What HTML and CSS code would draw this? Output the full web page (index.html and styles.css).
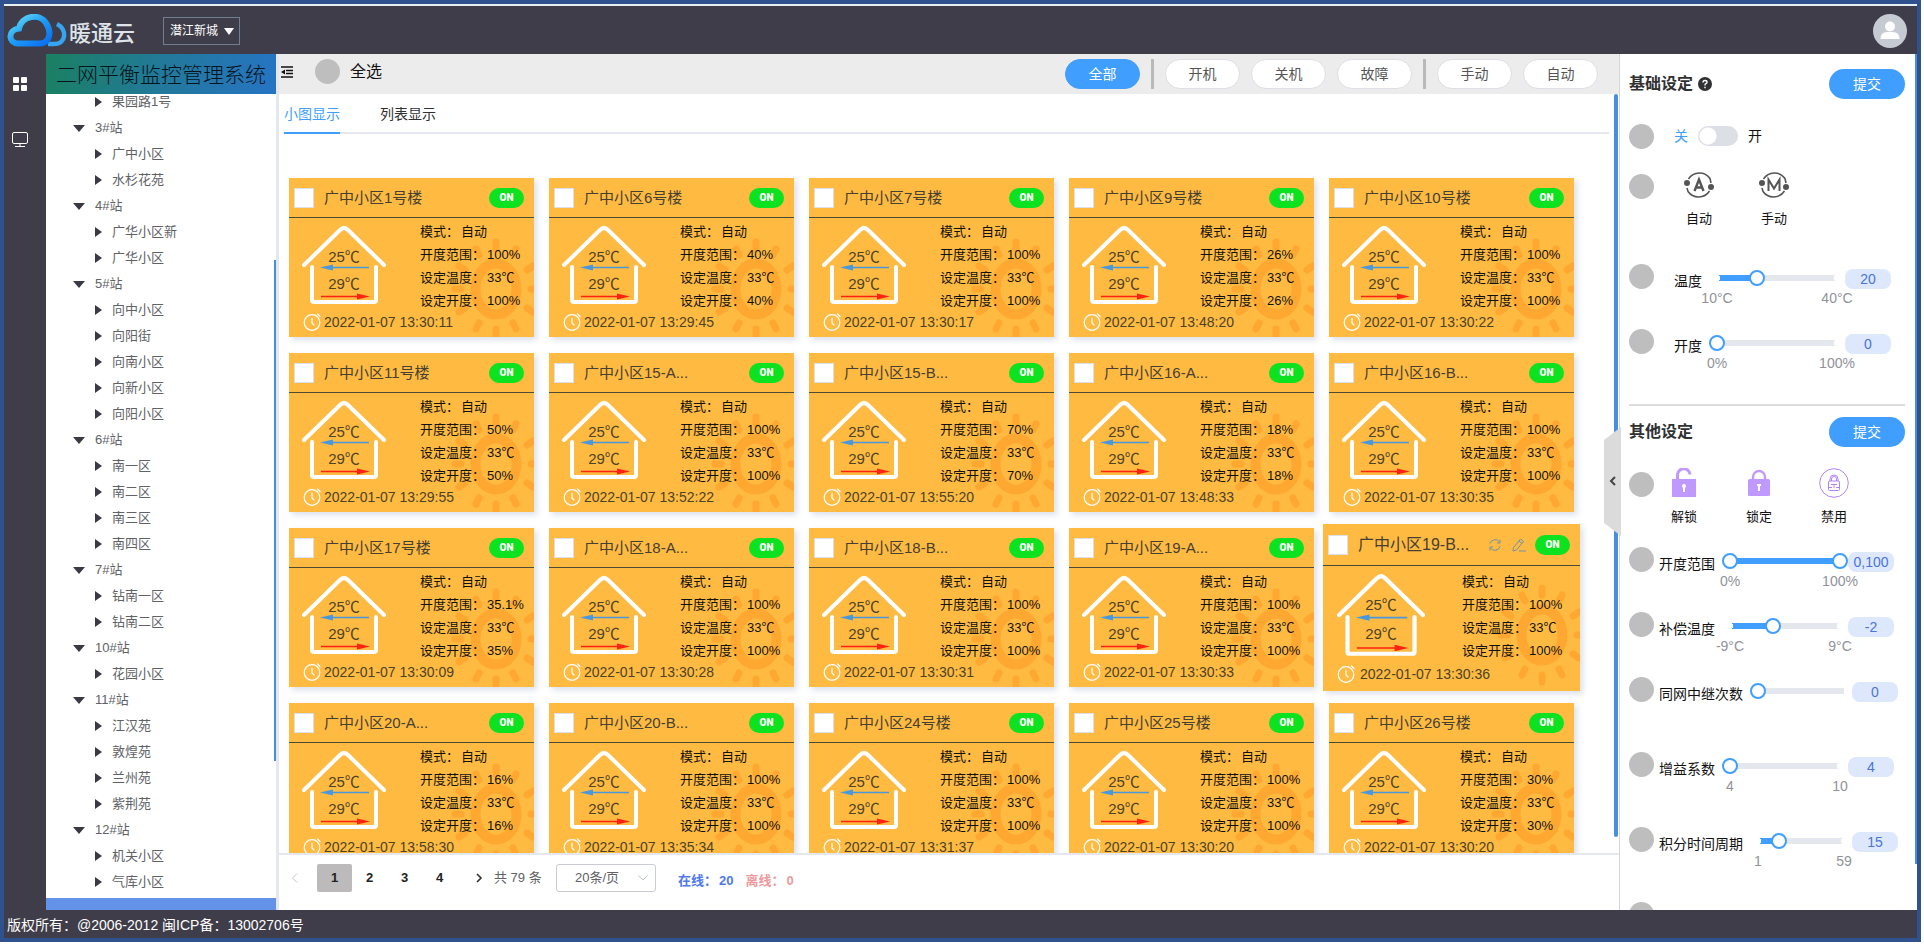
FILE: index.html
```html
<!DOCTYPE html>
<html lang="zh-CN">
<head>
<meta charset="utf-8">
<title>二网平衡监控管理系统</title>
<link rel="stylesheet" href="styles.css">
</head>
<body>
<svg class="defs" aria-hidden="true">
  <defs>
    <symbol id="house" viewBox="0 0 84 80">
      <g fill="none" stroke="#fff" stroke-width="4" stroke-linecap="round" stroke-linejoin="round">
        <path d="M2 40 38 5q4-4 8 0L82 40"/>
        <path d="M10 42v33q0 2 2 2h60q2 0 2-2V42"/>
      </g>
      <path d="M28 42.500h39" stroke="#4a98dc" stroke-width="1.500"/><path d="M18 42.500 31 39.500v6z" fill="#4a98dc"/>
      <path d="M19 71.500h38" stroke="#f21" stroke-width="1.500"/><path d="M68 71.500 55 68.500v6z" fill="#f21"/>
    </symbol>
    <symbol id="clock" viewBox="0 0 18 18">
      <g fill="none" stroke="#fff" stroke-width="1.200" stroke-linecap="round"><circle cx="9" cy="9.500" r="7.800"/><path d="M9 5v5l2 2M14.500 1l2.500 2.500"/></g>
    </symbol>
    <symbol id="sun" viewBox="0 0 110 110">
      <ellipse cx="55" cy="55" rx="20.500" ry="25.500" fill="none" stroke="#ffa831" stroke-width="10"/>
      <path fill="none" stroke="#ffa831" stroke-width="7" stroke-linecap="round" d="M55 8v7M75 15l-3 6M92 32l-6 4M96 55h-6M92 78l-6-4M75 95l-3-6M55 102v-7M35 95l3-6M18 78l6-4M14 55h6M18 32l6 4M35 15l3 6"/>
    </symbol>
  </defs>
</svg>
<div class="app">
  <header class="top">
    <svg class="logo" viewBox="0 0 60 34" aria-hidden="true">
      <defs><linearGradient id="lg" x1="0" y1="0" x2="1" y2="1"><stop offset="0" stop-color="#6fe3f5"/><stop offset=".5" stop-color="#1e9bf5"/><stop offset="1" stop-color="#0a6df0"/></linearGradient></defs>
      <path d="M50 10c10 5 10 20-3 20h-6" fill="none" stroke="#37a4f2" stroke-width="4.500"/>
      <path d="M11 29.500C1 29 .5 16 12 14.500 15 1 33-1 39 9c6 9 4 20-6 20.500z" fill="none" stroke="url(#lg)" stroke-width="6"/>
    </svg>
    <span class="brand">暖通云</span>
    <select class="city" aria-label="小区"><option>潜江新城</option></select>
    <svg class="avatar" viewBox="0 0 34 34" role="img" aria-label="用户"><circle cx="17" cy="17" r="17" fill="#c6cad2"/><circle cx="17" cy="12.500" r="5" fill="#fff"/><path d="M7.500 25q0-7 7-7h5q7 0 7 7z" fill="#fff"/></svg>
  </header>
  <div class="body">
    <nav class="rail">
      <svg viewBox="0 0 16 16" width="16" height="16"><g fill="#fff"><rect x="1" y="1" width="6" height="6" rx="1"/><rect x="9" y="1" width="6" height="6" rx="1"/><rect x="1" y="9" width="6" height="6" rx="1"/><rect x="9" y="9" width="6" height="6" rx="1"/></g></svg>
      <svg viewBox="0 0 16 16" width="16" height="16"><g fill="none" stroke="#fff"><rect x=".5" y=".5" width="15" height="11" rx="1.500"/><path d="M8 12v3M3 14.500h10"/></g></svg>
    </nav>
    <aside class="side">
      <h1 class="system">二网平衡监控管理系统</h1>
      <div class="treebox"><ul class="tree" id="tree"></ul></div>
      <div class="sidebar-end"></div>
    </aside>
    <main class="main">
      <div class="toolbar">
        <svg class="fold" viewBox="0 0 12 12" width="12" height="12"><path d="M0 1h12M5 4.500h7M5 7.500h7M0 11h12" stroke="#111" stroke-width="1.500"/><path d="M0 6l4-2.500v5z" fill="#111"/></svg>
        <input class="dot" type="checkbox" id="all"><label class="all" for="all">全选</label>
        <div class="filters">
          <button class="pill on">全部</button><i></i>
          <button class="pill">开机</button><button class="pill">关机</button><button class="pill">故障</button><i></i>
          <button class="pill">手动</button><button class="pill">自动</button>
        </div>
      </div>
      <div class="scroller">
        <div class="tabs"><button class="tab active">小图显示</button><button class="tab">列表显示</button></div>
        <div class="cards" id="cards"></div>
      </div>
      <div class="pager">
        <button class="pg" aria-label="上一页"><svg viewBox="0 0 12 12" width="12" height="12"><path d="M8 1.500 3.500 6 8 10.500" fill="none" stroke="#c0c4cc"/></svg></button>
        <button class="pg cur">1</button><button class="pg">2</button><button class="pg">3</button><button class="pg">4</button>
        <button class="pg next" aria-label="下一页"><svg viewBox="0 0 12 12" width="12" height="12"><path d="M4 2 8 6l-4 4" fill="none" stroke="#303133" stroke-width="1.600"/></svg></button>
        <span class="total">共 79 条</span>
        <select class="size" aria-label="每页条数"><option>20条/页</option></select>
        <b class="online">在线：<span>20</span></b><b class="offline">离线：<span>0</span></b>
      </div>
    </main>
    <aside class="panel">
      <button class="handle" aria-label="收起"><svg viewBox="0 0 8 12" width="8" height="12"><path d="M6 2 2 6l4 4" fill="none" stroke="#444" stroke-width="2"/></svg></button>
      <div class="head"><h2>基础设定</h2><svg class="help" viewBox="0 0 14 14" width="14" height="14"><circle cx="7" cy="7" r="7" fill="#303133"/><path d="M5 5.500q0-2 2-2t2 1.700q0 1-1.200 1.500Q7 7 7 8.500M7 9.700v1.500" fill="none" stroke="#fff" stroke-width="1.400"/></svg><button class="submit">提交</button></div>
      <div class="row h50"><input class="dot" type="checkbox" aria-label="开关"><div class="switchline"><span class="off">关</span><input type="checkbox" class="switch" aria-label="开机"><span>开</span></div></div>
      <div class="row h90"><input class="dot" type="checkbox" aria-label="模式">
        <div class="modes">
          <button class="mode"><svg viewBox="0 0 30 30" width="30" height="30"><g fill="none" stroke="#555" stroke-width="1.600"><path d="M4.500 9A13 13 0 0 1 26 8.500M27 13l-1-4.500M25.500 21A13 13 0 0 1 4 21.500M3 18l1 3.500"/><path d="M10.500 21 15 9.500 19.500 21M12 17.500h6" stroke-width="2.400"/></g><circle cx="3" cy="13" r="3" fill="#555"/><circle cx="27" cy="17" r="3" fill="#555"/></svg>自动</button>
          <button class="mode"><svg viewBox="0 0 30 30" width="30" height="30"><g fill="none" stroke="#555" stroke-width="1.600"><path d="M4.500 9A13 13 0 0 1 26 8.500M27 13l-1-4.500M25.500 21A13 13 0 0 1 4 21.500M3 18l1 3.500"/><path d="M9.500 21V9.500l5.500 9 5.500-9V21" stroke-width="2"/></g><circle cx="3" cy="13" r="3" fill="#555"/><circle cx="27" cy="17" r="3" fill="#555"/></svg>手动</button>
        </div></div>
      <div class="row base"><input class="dot" type="checkbox" aria-label="选择温度"><label for="r1">温度</label>
        <div class="slide"><input class="range" id="r1" type="range" min="10" max="40" value="20" style="--v:33.3%"><div class="marks"><span>10°C</span><span>40°C</span></div></div><output>20</output></div>
      <div class="row base"><input class="dot" type="checkbox" aria-label="选择开度"><label for="r2">开度</label>
        <div class="slide"><input class="range" id="r2" type="range" value="0" style="--v:0%"><div class="marks"><span>0%</span><span>100%</span></div></div><output>0</output></div>
      <hr>
      <div class="head"><h2>其他设定</h2><button class="submit">提交</button></div>
      <div class="row h75"><input class="dot" type="checkbox" aria-label="锁">
        <div class="modes locks">
          <button class="mode"><svg viewBox="0 0 30 30" width="30" height="30"><path d="M8.500 12V7.500a6 6 0 0 1 12.500-1" fill="none" stroke="#c099ff" stroke-width="3"/><path d="M3 11h24v18H3z" fill="#c099ff"/><path d="M15 17v7" stroke="#fff" stroke-width="2"/><circle cx="15" cy="18" r="2" fill="#fff"/></svg>解锁</button>
          <button class="mode"><svg viewBox="0 0 30 30" width="30" height="30"><path d="M9 12V9a6 6 0 0 1 12 0v3" fill="none" stroke="#c099ff" stroke-width="2.400"/><rect x="4" y="11" width="22" height="17" rx="1.500" fill="#c099ff"/><path d="M15 16v7M13 17h4" stroke="#fff" stroke-width="2"/></svg>锁定</button>
          <button class="mode"><svg viewBox="0 0 30 30" width="30" height="30"><g fill="none" stroke="#b184f5"><circle cx="15" cy="15" r="14.300"/><rect x="9.500" y="13" width="11" height="9.500" rx="1"/><path d="M11 13v-2a4 4 0 0 1 8 0v2M12.500 13v-2a2.500 2.500 0 0 1 5 0v2M12 16.500h6M15 17v3M10 19.500h3M17 19.500h3"/></g></svg>禁用</button>
        </div></div>
      <div class="row"><input class="dot" type="checkbox" aria-label="选择开度范围"><label for="r3">开度范围</label>
        <div class="slide"><input class="range" id="r3" type="range" value="0" style="--v:100%"><input class="range upper" type="range" value="100" aria-label="开度上限"><div class="marks"><span>0%</span><span>100%</span></div></div><output>0,100</output></div>
      <div class="row"><input class="dot" type="checkbox" aria-label="选择补偿温度"><label for="r4">补偿温度</label>
        <div class="slide"><input class="range" id="r4" type="range" min="-9" max="9" value="-2" style="--v:38.9%"><div class="marks"><span>-9°C</span><span>9°C</span></div></div><output>-2</output></div>
      <div class="row long h75"><input class="dot" type="checkbox" aria-label="选择中继次数"><label for="r5">同网中继次数</label>
        <div class="slide"><input class="range plain" id="r5" type="range" value="0" style="--v:0%"></div><output>0</output></div>
      <div class="row h75"><input class="dot" type="checkbox" aria-label="选择增益系数"><label for="r6">增益系数</label>
        <div class="slide"><input class="range" id="r6" type="range" min="4" max="10" value="4" style="--v:0%"><div class="marks"><span>4</span><span>10</span></div></div><output>4</output></div>
      <div class="row long h75"><input class="dot" type="checkbox" aria-label="选择积分时间"><label for="r7">积分时间周期</label>
        <div class="slide"><input class="range" id="r7" type="range" min="1" max="59" value="15" style="--v:24.1%"><div class="marks"><span>1</span><span>59</span></div></div><output>15</output></div>
      <div class="row"><input class="dot" type="checkbox" aria-label="更多"></div>
    </aside>
  </div>
  <footer class="foot">版权所有：@2006-2012 闽ICP备：13002706号</footer>
</div>
<script src="app.js"></script>
</body>
</html>
```
FILE: styles.css
```css
* { box-sizing: border-box; }
body { margin: 0; height: 100vh; padding: 0 3px 2px 0; background: #fff; color: #303133; font: 14px/20px "Liberation Sans", "Noto Sans CJK SC", sans-serif; overflow: hidden; }
button, input, select, output { font: inherit; color: inherit; margin: 0; }
button { border: 0; background: none; padding: 0; cursor: pointer; }
h1, h2, ul { margin: 0; padding: 0; }
.defs { position: absolute; width: 0; height: 0; }
.app { height: 100%; display: flex; flex-direction: column; border: 4px solid #2f528f; }

.top { flex: none; height: 50px; display: flex; align-items: center; padding: 2px 10px 0 3px; background: #3e3d49; border-top: 2px solid #e9eef0; }
.logo { width: 60px; height: 34px; }
.brand { margin-left: 2px; padding-top: 6px; font-size: 22px; font-weight: 500; color: #dfe3ea; line-height: 28px; }
.city { appearance: none; width: 77px; height: 28px; margin: 0 0 0 28px; padding: 0 6px; border: 1px solid #6f7f8f; border-radius: 0; background: url("data:image/svg+xml,%3Csvg xmlns='http://www.w3.org/2000/svg' width='10' height='7'%3E%3Cpath d='M0 0h10L5 7z' fill='white'/%3E%3C/svg%3E") no-repeat right 5px center; color: #fff; font-size: 12px; }
.avatar { width: 34px; height: 34px; margin-left: auto; }

.body { flex: 1; min-height: 0; display: flex; }
.rail { flex: none; width: 42px; background: #3e3d49; display: flex; flex-direction: column; align-items: center; gap: 40px; padding: 22px 10px 0 0; }
.side { flex: none; width: 233px; display: flex; flex-direction: column; border-right: 3px solid #e4e7ed; }
.system { height: 40px; line-height: 38px; text-align: center; font-size: 21px; font-weight: 300; font-family: KaiTi, "Noto Sans CJK SC", sans-serif; color: #06141c; background: linear-gradient(100deg, #1a8061, #22799a 50%, #2674c4); white-space: nowrap; }
.treebox { position: relative; flex: 1; min-height: 0; overflow: hidden; }
.treebox::after { content: ""; position: absolute; right: 0; top: 166px; bottom: 137px; width: 2px; background: #4590de; }
.tree { margin-top: -5px; list-style: none; font-size: 13px; color: #606266; }
.tree ul { list-style: none; }
.node { display: flex; align-items: center; gap: 10px; height: 26px; padding-left: 27px; }
.leaf { padding-left: 49px; }
.node::before { content: ""; border: 0 solid transparent; border-width: 7px 6px 0; border-top-color: #3a3a44; }
.node.leaf::before { border-color: transparent transparent transparent #3a3a44; border-width: 5px 0 5px 7px; }
.sidebar-end { flex: none; height: 12px; background: #6393e8; }

.main { flex: 1; min-width: 0; display: flex; flex-direction: column; }
.toolbar { flex: none; height: 40px; display: flex; align-items: center; padding: 0 21px 5px 2px; background: #ececec; }
.dot { appearance: none; flex: none; width: 25px; height: 25px; border-radius: 50%; background: #bebebe; }
.toolbar .dot { margin-left: 22px; }
.all { margin-left: 10px; font-size: 16px; color: #111; }
.filters { display: flex; gap: 11px; margin: 5px 0 0 auto; }
.filters i { width: 3px; background: #b9b9b9; }
.pill { width: 75px; height: 30px; border: 1px solid #dcdfe6; border-radius: 15px; background: #fff; color: #555; font-size: 14px; }
.pill.on { background: #409eff; border-color: #409eff; color: #fff; }

.scroller { position: relative; flex: 1; min-height: 0; overflow: hidden; padding: 0 10px 0 5px; }
.scroller::after { content: ""; position: absolute; right: 1px; top: 0; bottom: 16px; width: 4px; border-radius: 2px; background: #4590de; }
.tabs { display: flex; gap: 40px; border-bottom: 2px solid #e4e7ed; }
.tab { height: 40px; margin-bottom: -2px; padding-top: 2px; border-bottom: 2px solid transparent; }
.tab.active { color: #409eff; border-color: #409eff; }
.cards { display: grid; grid-template-columns: repeat(5, 1fr); gap: 16px 15px; padding: 44px 35px 0 5px; }
.card { position: relative; overflow: hidden; background: #ffba42; box-shadow: 3px 3px 6px rgba(110, 130, 170, .25); isolation: isolate; }
.card.lift { margin: -4px -6px; z-index: 1; }
.card header { display: flex; align-items: center; height: 40px; padding: 0 10px 0 5px; border-bottom: 1px solid #4d4a35; }
.lift header { height: 42px; }
.tick { appearance: none; flex: none; width: 20px; height: 20px; background: #fff; border: 1px solid #dcdfe6; }
.name { margin: 0 auto 0 10px; font-size: 15px; color: #454032; white-space: nowrap; }
.lift .name { font-size: 16px; }
.tools { display: flex; gap: 10px; margin-right: 9px; }
.state { flex: none; width: 35px; height: 20px; border-radius: 10px; background: #0ce21f; color: #fff; font: 900 10px/20px Roboto, "Liberation Sans", sans-serif; text-align: center; }
.sun { position: absolute; z-index: -1; right: -17px; top: 56px; width: 110px; height: 110px; }
.info { display: grid; grid-template: 94px 20px / 131px 1fr; padding-bottom: 5px; }
.lift .info { grid-template: 98px 20px / 139px 1fr; padding-bottom: 7px; }
.house { position: relative; width: 84px; margin: 7px 0 0 13px; }
.lift .house { width: 88px; margin-left: 14px; }
.house svg { position: absolute; width: 100%; height: 80px; }
.lift .house svg { height: 84px; }
.house p { position: relative; margin: 0; padding-top: 22px; font-size: 15px; line-height: 20px; color: #4c4327; text-align: center; }
.house p + p { padding-top: 7px; }
.lift .house p + p { padding-top: 9px; }
.facts { margin: 0; padding: 2px 0 0; font-size: 13px; line-height: 23px; color: #111; white-space: nowrap; }
.lift .facts { padding-top: 4px; }
.facts div { display: flex; }
.facts dd { margin: 0 0 0 2px; }
.time { grid-column: 1 / 3; display: flex; align-items: center; gap: 3px; padding-left: 14px; color: #4c4327; }
.lift .time { gap: 5px; }

.pager { flex: none; height: 57px; display: flex; align-items: flex-start; padding: 9px 0 0 8px; border-top: 2px solid #e4e7ed; font-size: 13px; color: #606266; }
.pg { width: 35px; height: 28px; border-radius: 2px; font-weight: 700; color: #222; }
.pg svg { vertical-align: -2px; }
.pg:first-child { width: 16px; margin-right: 14px; }
.pg.cur { background: #bcbaba; }
.pg.next { width: 16px; margin: 0 7px 0 14px; }
.total { line-height: 28px; width: 62px; }
.size { appearance: none; width: 100px; height: 28px; padding: 0 18px; border: 1px solid #c9ccd3; border-radius: 3px; background: url("data:image/svg+xml,%3Csvg xmlns='http://www.w3.org/2000/svg' width='10' height='6'%3E%3Cpath d='M.5.500 5 5 9.500.5' fill='none' stroke='%23c0c4cc'/%3E%3C/svg%3E") no-repeat right 7px center; }
.online, .offline { display: flex; gap: 2px; padding-top: 7px; margin-left: 22px; color: #4f78ea; }
.offline { margin-left: 12px; color: #ee9a9d; }

.panel { position: relative; flex: none; width: 298px; padding: 15px 12px 0 9px; border-left: 1px solid #d4d6da; clip-path: inset(0 0 0 -16px); }
.panel::after { content: ""; position: absolute; right: 0; top: 0; bottom: 46px; width: 2px; background: #4590de; }
.handle { position: absolute; left: -16px; top: 373px; width: 17px; height: 109px; background: #dbdbdb; clip-path: polygon(100% 0, 0 12%, 0 88%, 100% 100%); }
.head { display: flex; align-items: center; height: 30px; margin-bottom: 25px; }
.head h2 { font-size: 16px; font-weight: 700; }
.help { margin-left: 5px; }
.submit { width: 76px; height: 30px; margin-left: auto; border-radius: 15px; background: #409eff; color: #fff; }
.panel hr { height: 2px; margin: 10px 0 11px; border: 0; background: #dcdcdc; }
.row { display: flex; align-items: flex-start; height: 65px; color: #111; }
.row.h50 { height: 50px; }
.row.h75 { height: 75px; }
.row.h90 { height: 90px; }
.switchline { display: flex; align-items: center; gap: 10px; margin: 2px 0 0 20px; }
.off { color: #409eff; }
.switch { appearance: none; width: 40px; height: 20px; border-radius: 10px; background: radial-gradient(circle at 10px 10px, #fff 8px, transparent 9px) #dcdfe6; }
.modes { display: flex; gap: 45px; margin: -4px 0 0 30px; }
.modes.locks { margin-left: 15px; }
.mode { width: 30px; display: flex; flex-direction: column; align-items: center; gap: 9px; font-size: 13px; white-space: nowrap; }
.row label { width: 63px; margin: 7px 0 0 5px; white-space: nowrap; }
.row.base label { width: 35px; margin-left: 20px; }
.row.long label { width: 91px; }
.slide { position: relative; width: 126px; padding-top: 6px; }
.base .slide { width: 136px; }
.long .slide { width: 102px; }
.range { appearance: none; display: block; width: 100%; height: 16px;
  background: radial-gradient(circle, #fff 3px, transparent 3px) 5px center / 6px 6px no-repeat,
    radial-gradient(circle, #fff 3px, transparent 3px) right 5px center / 6px 6px no-repeat,
    linear-gradient(to right, #409eff var(--v), #e4e7ed var(--v)) center / calc(100% - 16px) 6px no-repeat; }
.range.plain { background: linear-gradient(#e4e7ed, #e4e7ed) center / calc(100% - 16px) 6px no-repeat; }
.range.upper { position: absolute; top: 6px; left: 0; background: none; pointer-events: none; }
.range::-webkit-slider-thumb { appearance: none; width: 16px; height: 16px; border: 2px solid #409eff; border-radius: 50%; background: #fff; pointer-events: auto; }
.marks { display: flex; justify-content: space-between; padding: 2px 8px 0; color: #909399; }
.marks span { display: flex; justify-content: center; width: 0; white-space: nowrap; }
.row output { width: 46px; height: 20px; margin-top: 5px; border-radius: 8px; background: #dde8fc; color: #4a74d6; text-align: center; }

.foot { flex: none; height: 28px; padding-left: 3px; background: #3e3d49; color: #fff; line-height: 30px; }
```
FILE: app.js
```js
const stations = [
  ['', ['果园路1号']],
  ['3#站', ['广中小区', '水杉花苑']],
  ['4#站', ['广华小区新', '广华小区']],
  ['5#站', ['向中小区', '向阳街', '向南小区', '向新小区', '向阳小区']],
  ['6#站', ['南一区', '南二区', '南三区', '南四区']],
  ['7#站', ['钻南一区', '钻南二区']],
  ['10#站', ['花园小区']],
  ['11#站', ['江汉苑', '敦煌苑', '兰州苑', '紫荆苑']],
  ['12#站', ['机关小区', '气库小区']]
];
document.getElementById('tree').innerHTML = stations.map(([name, kids]) =>
  `<li>${name ? `<div class="node">${name}</div>` : ''}<ul>${kids.map(k => `<li class="node leaf">${k}</li>`).join('')}</ul></li>`
).join('');

const units = [
  ['1号楼', '100%', '13:30:11'], ['6号楼', '40%', '13:29:45'], ['7号楼', '100%', '13:30:17'], ['9号楼', '26%', '13:48:20'], ['10号楼', '100%', '13:30:22'],
  ['11号楼', '50%', '13:29:55'], ['15-A...', '100%', '13:52:22'], ['15-B...', '70%', '13:55:20'], ['16-A...', '18%', '13:48:33'], ['16-B...', '100%', '13:30:35'],
  ['17号楼', '35.1%', '13:30:09', '35%'], ['18-A...', '100%', '13:30:28'], ['18-B...', '100%', '13:30:31'], ['19-A...', '100%', '13:30:33'], ['19-B...', '100%', '13:30:36'],
  ['20-A...', '16%', '13:58:30'], ['20-B...', '100%', '13:35:34'], ['24号楼', '100%', '13:31:37'], ['25号楼', '100%', '13:30:20'], ['26号楼', '30%', '13:30:20']
];
const lifted = '19-B...';
const tools = `<span class="tools">
  <svg viewBox="0 0 14 14" width="14" height="14"><path d="M2 5.500a5.300 5.300 0 0 1 9.500-1.500M12 1.500V5H9M12 8.500A5.300 5.300 0 0 1 2.500 10M2 12.500V9h3" fill="none" stroke="#6e93a8"/></svg>
  <svg viewBox="0 0 14 14" width="14" height="14"><path d="M1.500 9.500 8.500 1l3 2.500-7 8.500-3.500 1zM7 3l3 2.500M7 13h7" fill="none" stroke="#6e93a8"/></svg></span>`;
document.getElementById('cards').innerHTML = units.map(([n, range, time, open = range]) => `
  <article class="card${n === lifted ? ' lift' : ''}">
    <svg class="sun"><use href="#sun"/></svg>
    <header><input class="tick" type="checkbox" aria-label="${n}"><span class="name">广中小区${n}</span>${n === lifted ? tools : ''}<span class="state">ON</span></header>
    <div class="info">
      <div class="house"><svg viewBox="0 0 84 80"><use href="#house"/></svg><p>25℃</p><p>29℃</p></div>
      <dl class="facts"><div><dt>模式：</dt><dd>自动</dd></div><div><dt>开度范围：</dt><dd>${range}</dd></div><div><dt>设定温度：</dt><dd>33℃</dd></div><div><dt>设定开度：</dt><dd>${open}</dd></div></dl>
      <div class="time"><svg width="18" height="18"><use href="#clock"/></svg>2022-01-07 ${time}</div>
    </div>
  </article>`).join('');
```
